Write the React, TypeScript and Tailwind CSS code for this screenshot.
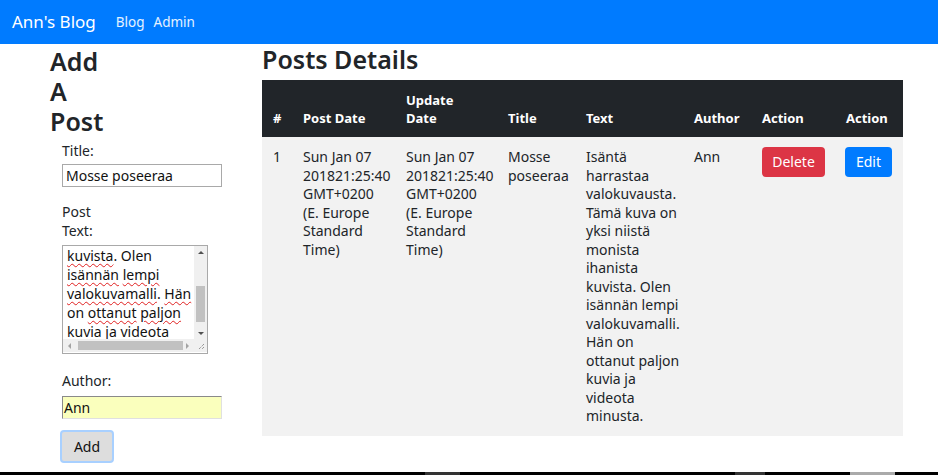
import React from "react";

const font = { fontFamily: '"Noto Sans", "Open Sans", sans-serif' };

const postText = [
  "Isäntä",
  "harrastaa",
  "valokuvausta.",
  "Tämä kuva on",
  "yksi niistä",
  "monista",
  "ihanista",
  "kuvista. Olen",
  "isännän lempi",
  "valokuvamalli.",
  "Hän on",
  "ottanut paljon",
  "kuvia ja",
  "videota",
  "minusta.",
];

const dateLines = ["Sun Jan 07", "201821:25:40", "GMT+0200", "(E. Europe", "Standard", "Time)"];

function Squiggle({ children }: { children: React.ReactNode }) {
  return (
    <span className="underline decoration-wavy decoration-[#e02020] decoration-1 underline-offset-2">
      {children}
    </span>
  );
}

function FakeTextarea() {
  return (
    <div className="relative w-[146px] h-[109px] border border-[#a9a9a9] bg-white overflow-hidden">
      <div className="absolute left-[4px] top-[-19px] text-[14px] leading-[19px] text-[#111] whitespace-nowrap">
        <div className="h-[19px]">
          <Squiggle>&nbsp;&nbsp;&nbsp;&nbsp;&nbsp;&nbsp;&nbsp;&nbsp;&nbsp;&nbsp;&nbsp;&nbsp;&nbsp;&nbsp;&nbsp;&nbsp;&nbsp;&nbsp;&nbsp;&nbsp;&nbsp;&nbsp;&nbsp;&nbsp;</Squiggle>
        </div>
        <div><Squiggle>kuvista</Squiggle>. Olen</div>
        <div><Squiggle>isännän</Squiggle> <Squiggle>lempi</Squiggle></div>
        <div><Squiggle>valokuvamalli</Squiggle>. <Squiggle>Hän</Squiggle></div>
        <div>on <Squiggle>ottanut</Squiggle> <Squiggle>paljon</Squiggle></div>
        <div><Squiggle>kuvia</Squiggle> <Squiggle>ja</Squiggle> <Squiggle>videota</Squiggle></div>
      </div>
      {/* vertical scrollbar */}
      <div className="absolute right-0 top-0 w-[13px] h-[94px] bg-[#f0f0f0] flex flex-col items-center">
        <div className="h-[13px] flex items-center justify-center">
          <div className="w-0 h-0 border-l-[3px] border-r-[3px] border-b-[3px] border-l-transparent border-r-transparent border-b-[#505050]" />
        </div>
        <div className="flex-1 w-full relative">
          <div className="absolute left-[2px] right-[2px] top-[27px] h-[36px] bg-[#c1c1c1]" />
        </div>
        <div className="h-[13px] flex items-center justify-center">
          <div className="w-0 h-0 border-l-[3px] border-r-[3px] border-t-[3px] border-l-transparent border-r-transparent border-t-[#505050]" />
        </div>
      </div>
      {/* horizontal scrollbar */}
      <div className="absolute left-0 bottom-[1px] w-[131px] h-[13px] bg-[#f0f0f0] flex items-center">
        <div className="w-[13px] flex items-center justify-center">
          <div className="w-0 h-0 border-t-[3px] border-b-[3px] border-r-[3px] border-t-transparent border-b-transparent border-r-[#a3a3a3]" />
        </div>
        <div className="flex-1 h-full relative">
          <div className="absolute top-[2px] bottom-[2px] left-[2px] w-[105px] bg-[#c1c1c1]" />
        </div>
        <div className="w-[13px] flex items-center justify-center">
          <div className="w-0 h-0 border-t-[3px] border-b-[3px] border-l-[3px] border-t-transparent border-b-transparent border-l-[#a3a3a3]" />
        </div>
      </div>
      <div className="absolute right-0 bottom-[1px] w-[13px] h-[13px] bg-[#f0f0f0] flex items-end justify-end p-[2px]">
        <svg width="7" height="7" viewBox="0 0 7 7">
          <path d="M6 1 L1 6 M6 4 L4 6" stroke="#707070" strokeWidth="1" strokeDasharray="1 1" />
        </svg>
      </div>
    </div>
  );
}

export default function App() {
  return (
    <div className="h-[475px] w-[938px] overflow-hidden flex flex-col bg-white text-[#212529]" style={font}>
      <nav className="h-[44px] bg-[#007bff] flex items-center px-[12px] shrink-0">
        <span className="text-white text-[17px] mr-[20px]">Ann's Blog</span>
        <span className="text-white/90 text-[13.5px] mr-[9px]">Blog</span>
        <span className="text-white/90 text-[13.5px]">Admin</span>
      </nav>

      <div className="flex-1 flex">
        {/* left: form */}
        <div className="w-[262px] shrink-0 pl-[50px] pt-[2px]">
          <h2 className="w-[60px] text-[25px] leading-[30px] font-semibold text-[#212529]">
            Add A Post
          </h2>
          <form className="pl-[12px] pt-[5px] text-[14px]">
            <label className="block leading-[20px] mb-[3px]">Title:</label>
            <div className="w-[160px] h-[23px] border border-[#a9a9a9] flex items-center px-[3px] text-[14px] text-[#111]">
              Mosse poseeraa
            </div>
            <label className="block w-[34px] leading-[19px] mt-[15px] mb-[5px]">Post Text:</label>
            <FakeTextarea />
            <label className="block leading-[20px] mt-[17px] mb-[5px]">Author:</label>
            <div className="w-[160px] h-[23px] border border-[#e0e0e0] border-t-[#8a8a8a] border-l-[#8a8a8a] bg-[#faffbd] flex items-center px-[1px] text-[14px] text-[#111]">
              Ann
            </div>
            <button
              type="button"
              className="mt-[11px] -ml-[2px] w-[54px] h-[33px] bg-[#dddddd] border-2 border-[#a8d0ff] rounded-[4px] text-[14px] text-[#111]"
            >
              Add
            </button>
          </form>
        </div>

        {/* right: table */}
        <div className="flex-1">
          <h2 className="text-[25px] leading-[30px] font-semibold mt-[0px] mb-[6px] text-[#212529]">
            Posts Details
          </h2>
          <table className="table-fixed w-[641px] border-collapse text-[14px]">
            <colgroup>
              <col className="w-[29px]" />
              <col className="w-[103px]" />
              <col className="w-[102px]" />
              <col className="w-[78px]" />
              <col className="w-[108px]" />
              <col className="w-[68px]" />
              <col className="w-[84px]" />
              <col className="w-[69px]" />
            </colgroup>
            <thead>
              <tr className="bg-[#212529] text-white h-[57px]">
                {["#", "Post Date", "Update|Date", "Title", "Text", "Author", "Action", "Action"].map((h, i) => (
                  <th
                    key={i}
                    className={`align-bottom text-left font-bold text-[13px] leading-[18px] pb-[10px] pt-[10px] whitespace-nowrap ${i === 0 ? "pl-[11px]" : "pl-[12px]"}`}
                  >
                    {h.split("|").map((p, j) => (
                      <div key={j}>{p}</div>
                    ))}
                  </th>
                ))}
              </tr>
            </thead>
            <tbody>
              <tr className="bg-[#f2f2f2] align-top leading-[18.5px] text-[#212529] whitespace-nowrap">
                <td className="pl-[11px] pt-[11px] pb-[10px]">1</td>
                {[0, 1].map((k) => (
                  <td key={k} className="pl-[12px] pt-[11px]">
                    {dateLines.map((l, i) => (
                      <div key={i}>{l}</div>
                    ))}
                  </td>
                ))}
                <td className="pl-[12px] pt-[11px]">
                  <div>Mosse</div>
                  <div>poseeraa</div>
                </td>
                <td className="pl-[12px] pt-[11px] pb-[10px]">
                  {postText.map((l, i) => (
                    <div key={i}>{l}</div>
                  ))}
                </td>
                <td className="pl-[12px] pt-[11px]">Ann</td>
                <td className="pl-[12px] pt-[10px]">
                  <button type="button" className="w-[63px] h-[30px] bg-[#dc3545] text-white rounded-[4px] text-[14px]">
                    Delete
                  </button>
                </td>
                <td className="pl-[11px] pt-[10px]">
                  <button type="button" className="w-[47px] h-[30px] bg-[#007bff] text-white rounded-[4px] text-[14px]">
                    Edit
                  </button>
                </td>
              </tr>
            </tbody>
          </table>
        </div>
      </div>

      <div className="h-[3px] bg-black shrink-0 flex">
        <div className="w-[425px]" />
        <div className="w-[35px] bg-[#333]" />
        <div className="w-[275px]" />
        <div className="w-[30px] bg-[#333]" />
        <div className="w-[85px]" />
        <div className="w-[45px] bg-[#aaa]" />
      </div>
    </div>
  );
}
